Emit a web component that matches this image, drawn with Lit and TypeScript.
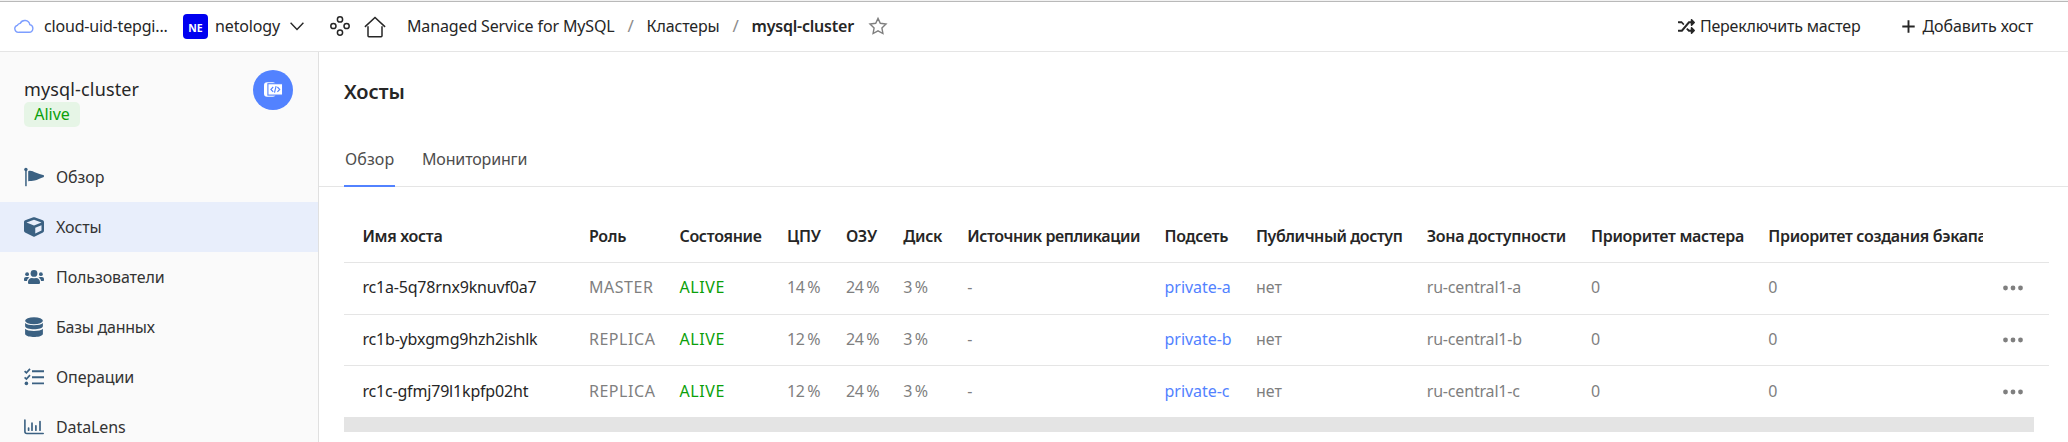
import { LitElement, html, css, svg } from "lit";
import { customElement, property } from "lit/decorators.js";
import { classMap } from "lit/directives/class-map.js";

const flag = svg`<svg width="20" height="20" viewBox="0 0 20 20" fill="currentColor"><circle cx="1.9" cy="2.5" r="1.7"/><rect x="1.2" y="2.5" width="1.5" height="16.7"/><path d="M4.2 4.2C7 3.2 9 4.6 11.500 5.600 14 6.700 17 7.600 19.900 8.300V9.900C16 11.300 13.500 12.700 10.500 13.500 8.500 14 6.500 13.800 4.200 14.200Z"/></svg>`;
const cube = svg`<svg width="20" height="20" viewBox="0 0 512 512" fill="currentColor"><path d="M239.100 6.300l-208 78c-18.700 7-31.100 25-31.100 45v225.100c0 18.200 10.300 34.800 26.500 42.900l208 104c13.500 6.800 29.400 6.800 42.900 0l208-104c16.300-8.100 26.500-24.800 26.500-42.900V129.300c0-20-12.400-37.900-31.100-44.900l-208-78C262 2.200 250 2.200 239.100 6.300zM256 68.400l192 72v1.100l-192 78-192-78v-1.100l192-72zm32 356V275.500l160-65v133.900l-160 80z"/></svg>`;
const users = svg`<svg width="20" height="20" viewBox="0 0 20 20" fill="currentColor"><circle cx="10" cy="6.400" r="3.400"/><circle cx="3.100" cy="7.200" r="1.900"/><circle cx="16.900" cy="7.200" r="1.900"/><path d="M4 15.200C4 12.600 5.700 10.900 8 10.900c1.300.5 2.700.5 4 0 2.300 0 4 1.700 4 4.300v.5c0 .7-.6 1.300-1.300 1.300H5.300C4.600 17 4 16.400 4 15.700ZM0 12.200C0 10.900.9 10 2.100 10h1.800c.6 0 1.100.2 1.500.6C4 11.400 3.200 12.500 3 14H1c-.6 0-1-.4-1-1ZM20 12.200c0-1.300-.9-2.200-2.100-2.200h-1.800c-.6 0-1.100.2-1.500.6 1.400.8 2.200 1.900 2.400 3.400h2c.6 0 1-.4 1-1Z"/></svg>`;
const database = svg`<svg width="20" height="20" viewBox="0 0 20 20" fill="currentColor"><ellipse cx="10" cy="3.700" rx="8.900" ry="3.500"/><path d="M1.100 5.900c2.500 3 15.300 3 17.800 0v3.200c0 4.300-17.800 4.300-17.800 0Z"/><path d="M1.100 11.800c2.500 3 15.300 3 17.800 0v5c0 4.300-17.800 4.300-17.800 0Z"/></svg>`;
const tasks = svg`<svg width="20" height="20" viewBox="0 0 20 20" fill="none" stroke="currentColor" stroke-width="1.900"><path d="M8 4.200H20M8 10.300H20M8 16.400H20"/><path d="M.6 4.200 2.400 5.900 6 1.900M.6 10.400 2.400 12.100 6 8.100" stroke-width="1.700"/><circle cx="2.400" cy="16.400" r="1.800" fill="currentColor" stroke="none"/></svg>`;
const chart = svg`<svg width="20" height="20" viewBox="0 0 20 20" fill="none" stroke="currentColor" stroke-width="1.600" stroke-linecap="round"><path d="M.9 3V14.500q0 2 2 2H19.200" stroke-linejoin="round"/><path d="M4.600 13.200V11M8 13.200V6.200M11.900 13.200V8.800M16 13.200V4.600" stroke-width="1.700"/></svg>`;
const cloud = svg`<svg width="20" height="16" viewBox="0 0 20 16" fill="none" stroke="#7d9eff" stroke-width="1.400"><path d="M4.800 14.300H15.200A3.900 3.900 0 0 0 15.800 6.600 5.100 5.100 0 0 0 6.200 5.400 4 4 0 0 0 3.300 7.300 3.600 3.600 0 0 0 4.800 14.300Z"/></svg>`;
const chevron = svg`<svg width="14" height="9" viewBox="0 0 14 9" fill="none" stroke="#262626" stroke-width="1.400"><path d="M.6 .8 7 7.400 13.400 .8"/></svg>`;
const services = svg`<svg width="20" height="20" viewBox="0 0 20 20" fill="none" stroke="#262626" stroke-width="1.500"><circle cx="10" cy="3.400" r="2.600"/><circle cx="10" cy="16.600" r="2.600"/><circle cx="3.400" cy="10" r="2.600"/><circle cx="16.600" cy="10" r="2.600"/></svg>`;
const home = svg`<svg width="22" height="22" viewBox="0 0 22 22" fill="none" stroke="#262626" stroke-width="1.500"><path d="M.9 10.900 11 1.500 21.100 10.900"/><path d="M4 10.200V19.800q0 .9.900.9H17.100q.9 0 .9-.9V10.200"/></svg>`;
const star = svg`<svg width="20" height="20" viewBox="0 0 20 20" fill="none" stroke="#7f7f7f" stroke-width="1.400"><path d="M10 2.400 12.300 7.300 18 8 13.900 11.900 14.900 17.500 10 14.900 5.100 17.500 6.100 11.900 2 8 7.700 7.300Z"/></svg>`;
const shuffle = svg`<svg width="17" height="17" viewBox="0 0 512 512" fill="#262626"><path d="M504.971 359.029c9.373 9.373 9.373 24.569 0 33.941l-80 79.984c-15.010 15.010-40.971 4.490-40.971-16.971V416h-58.785a12.004 12.004 0 0 1-8.773-3.812l-70.556-75.596 33.333-37.143L347 356h37v-59.981c0-21.438 25.943-31.998 40.971-16.971l80 79.981zM12 156h92l54.781 60.551 33.333-37.143-70.556-75.596A11.999 11.999 0 0 0 122.785 96H12c-6.627 0-12 5.373-12 12v36c0 6.627 5.373 12 12 12zm372 0v59.984c0 21.460 25.961 31.980 40.971 16.971l80-79.984c9.373-9.373 9.373-24.569 0-33.941l-80-79.981C409.943 24.021 384 34.582 384 56.019V96h-58.785a12.004 12.004 0 0 0-8.773 3.812L101 356H12c-6.627 0-12 5.373-12 12v36c0 6.627 5.373 12 12 12h110.785c3.326 0 6.503-1.381 8.773-3.812L347 156h37z"/></svg>`;
const plus = svg`<svg width="13" height="13" viewBox="0 0 13 13" stroke="#262626" stroke-width="1.900"><path d="M6.500 .3V12.700M.3 6.500H12.700"/></svg>`;
const code = svg`<svg width="20" height="16" viewBox="0 0 20 16"><rect x="1" y=".2" width="11.700" height="14.600" rx="3" fill="#fff"/><rect x="4.900" y="1.700" width="14.700" height="11.400" fill="#fff" stroke="#5282ff" stroke-width="1.100"/><path fill="none" stroke="#5282ff" stroke-width="1.150" d="M10.200 5 7.900 7.400 10.200 9.800M14.400 5 16.700 7.400 14.400 9.800M13.100 4.200 11.500 10.600"/></svg>`;
const dots = svg`<svg width="20" height="6" viewBox="0 0 20 6" fill="#7f7f7f"><circle cx="2.500" cy="3" r="2.400"/><circle cx="10" cy="3" r="2.400"/><circle cx="17.500" cy="3" r="2.400"/></svg>`;

const base = css`
  * { box-sizing: border-box; }
  :host { display: block; }
  svg { display: block; flex: none; }
`;

@customElement("top-bar")
class TopBar extends LitElement {
  static styles = [base, css`
    .bar { display: flex; align-items: center; height: 50px; padding: 0 35px 1px 14px; border-bottom: 1px solid #e5e5e5; letter-spacing: -.14px; }
    .cloud { margin-right: 10px; }
    .name { width: 139px; letter-spacing: -.18px; }
    .avatar { width: 25px; height: 25px; border-radius: 4px; background: #0000f0; color: #fff; font-size: 10.500px; font-weight: 700; letter-spacing: 0; display: flex; align-items: center; justify-content: center; padding-top: 2px; margin-top: 1px; }
    .folder { width: 75px; margin-left: 7px; }
    .down { padding-top: 1px; }
    .services { margin-left: 26px; }
    .home { margin: 1px 0 0 14px; }
    .crumbs { display: flex; margin-left: 21px; }
    .sep { width: 32px; text-align: center; color: #8c8c8c; font-size: 17px; }
    .current { font-weight: 600; letter-spacing: -.22px; }
    .star { margin-left: 14px; }
    .actions { display: flex; gap: 42px; margin-left: auto; }
    .action { display: flex; align-items: center; }
    .switch { gap: 5px; letter-spacing: -.2px; }
    .add { gap: 7px; letter-spacing: -.08px; }
  `];
  render() {
    return html`<header class="bar">
      <div class="cloud">${cloud}</div><div class="name">cloud-uid-tepgi...</div>
      <div class="avatar">NE</div><div class="folder">netology</div><div class="down">${chevron}</div>
      <div class="services">${services}</div><div class="home">${home}</div>
      <nav class="crumbs"><span>Managed Service for MySQL</span><span class="sep">/</span><span>Кластеры</span><span class="sep">/</span><span class="current">mysql-cluster</span></nav>
      <div class="star">${star}</div>
      <div class="actions"><div class="action switch">${shuffle}<span>Переключить мастер</span></div><div class="action add">${plus}<span>Добавить хост</span></div></div>
    </header>`;
  }
}

const NAV = [
  { icon: flag, text: "Обзор" },
  { icon: cube, text: "Хосты", active: true },
  { icon: users, text: "Пользователи" },
  { icon: database, text: "Базы данных", tight: true },
  { icon: tasks, text: "Операции" },
  { icon: chart, text: "DataLens" },
];

@customElement("side-bar")
class SideBar extends LitElement {
  static styles = [base, css`
    :host { width: 319px; flex: none; background: #fafafa; border-right: 1px solid #e0e0e0; }
    .head { display: flex; justify-content: space-between; height: 100px; padding: 18px 25px 0 24px; }
    .title { font-size: 18px; line-height: 24px; margin-top: 7px; letter-spacing: .15px; color: #262626; }
    .badge { width: 56px; height: 25px; margin-top: 1px; border-radius: 5px; background: #e6f5e6; color: #0aa00a; text-align: center; line-height: 24px; }
    .round { width: 40px; height: 40px; border-radius: 50%; background: #5282ff; display: flex; align-items: center; justify-content: center; }
    .item { display: flex; align-items: center; gap: 12px; height: 50px; padding-left: 24px; color: #333; letter-spacing: -.1px; }
    .item svg { color: #3b6182; }
    .active { background: #e8eefb; }
    .tight { letter-spacing: -.25px; }
  `];
  render() {
    return html`<div class="head"><div><div class="title">mysql-cluster</div><div class="badge">Alive</div></div><div class="round">${code}</div></div>
      ${NAV.map(n => html`<div class=${classMap({ item: true, active: !!n.active, tight: !!n.tight })}>${n.icon}<span>${n.text}</span></div>`)}`;
  }
}

const COLUMNS = ["Имя хоста", "Роль", "Состояние", "ЦПУ", "ОЗУ", "Диск", "Источник репликации", "Подсеть", "Публичный доступ", "Зона доступности", "Приоритет мастера", "Приоритет создания бэкапа"];
const TIGHTER = new Set([6, 8]);
const HOSTS = [
  { name: "rc1a-5q78rnx9knuvf0a7", role: "MASTER", cpu: 14, zone: "a" },
  { name: "rc1b-ybxgmg9hzh2ishlk", role: "REPLICA", cpu: 12, zone: "b" },
  { name: "rc1c-gfmj79l1kpfp02ht", role: "REPLICA", cpu: 12, zone: "c" },
];

@customElement("host-table")
class HostTable extends LitElement {
  static styles = [base, css`
    .row { display: grid; grid-template-columns: 226.500px 90.500px 107.700px 58.900px 57.200px 64.200px 197.200px 91.500px 170.700px 164.300px 177.300px 214.200px 1fr; align-items: center; height: 51px; padding: 0 0 2px 18.400px; border-bottom: 1px solid #e5e5e5; color: #7f7f7f; white-space: nowrap; }
    .row.first { height: 52px; padding-bottom: 3px; }
    .row.last { border-bottom-color: transparent; padding-bottom: 1px; }
    .row.header { height: 52px; color: #262626; font-weight: 600; letter-spacing: -.3px; }
    .header .tighter { letter-spacing: -.44px; }
    .clip { overflow: hidden; letter-spacing: -.34px; }
    .name { color: #262626; letter-spacing: -.18px; }
    .role { letter-spacing: .55px; }
    .alive { color: #0aa00a; letter-spacing: .6px; }
    .pct { letter-spacing: -.4px; word-spacing: -1px; }
    .link { color: #5282ff; letter-spacing: -.05px; }
    .zone { letter-spacing: -.18px; }
    .more { padding: 2px 0 0 20px; }
  `];
  render() {
    return html`<div class="row header">${COLUMNS.map((c, i) => html`<div class=${classMap({ tighter: TIGHTER.has(i), clip: i === 11 })}>${c}</div>`)}</div>
      ${HOSTS.map((h, i) => html`<div class=${classMap({ row: true, first: i === 0, last: i === HOSTS.length - 1 })}>
        <div class="name">${h.name}</div><div class="role">${h.role}</div><div class="alive">ALIVE</div>
        <div class="pct">${h.cpu} %</div><div class="pct">24 %</div><div class="pct">3 %</div><div>-</div>
        <div class="link">private-${h.zone}</div><div>нет</div><div class="zone">ru-central1-${h.zone}</div><div>0</div><div>0</div><div class="more">${dots}</div>
      </div>`)}`;
  }
}

@customElement("app-root")
class AppRoot extends LitElement {
  @property({ type: String }) heading = "Хосты";
  static styles = [base, css`
    :host { height: 442px; overflow: hidden; background: #fff; color: #262626; font: 16px/22px "Noto Sans", sans-serif; border-top: 1px solid #f2f2f2; }
    .shade { height: 1px; background: #b9b9b9; }
    .body { display: flex; height: 390px; }
    .main { flex: 1; min-width: 0; }
    .heading { margin: 0; padding: 26px 0 0 25px; font-size: 20px; line-height: 28px; font-weight: 600; }
    .tabs { display: flex; gap: 26px; height: 45px; margin-top: 36px; padding-left: 25px; border-bottom: 1px solid #e5e5e5; color: #4d4d4d; }
    .tab { padding: 6px 1px 0; height: 45px; letter-spacing: -.16px; }
    .selected { width: 51px; border-bottom: 2px solid #5282ff; letter-spacing: .1px; }
    .table { padding: 24px 19px 0 25px; }
    .scroll { width: 1690px; height: 15px; background: #e4e4e4; margin-left: 25px; }
  `];
  render() {
    return html`<div class="shade"></div><top-bar></top-bar>
      <div class="body"><side-bar></side-bar><main class="main">
        <h1 class="heading">${this.heading}</h1>
        <div class="tabs"><div class="tab selected">Обзор</div><div class="tab">Мониторинги</div></div>
        <div class="table"><host-table></host-table></div><div class="scroll"></div>
      </main></div>`;
  }
}
